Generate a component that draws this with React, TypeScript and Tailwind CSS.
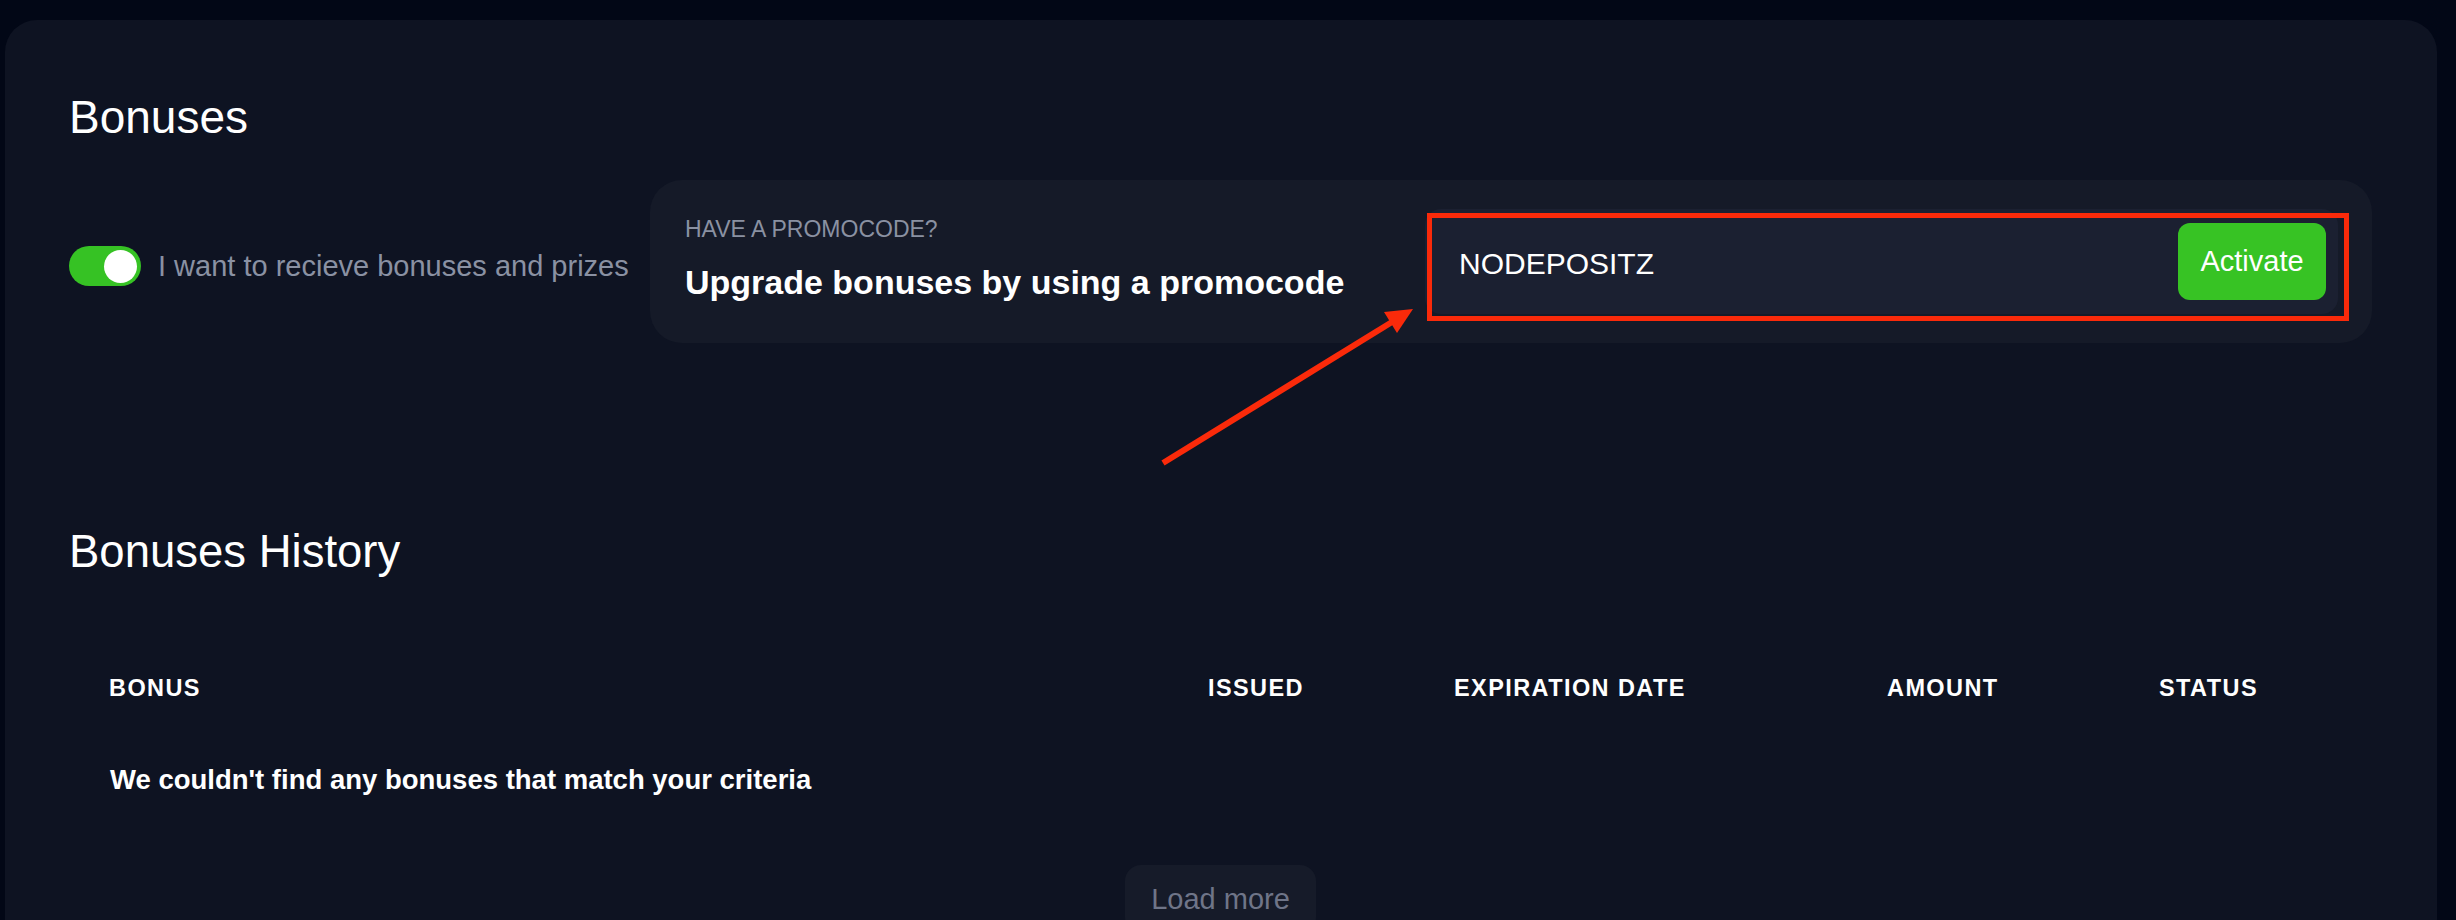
import React, { useState } from 'react';

const font = { fontFamily: '"Liberation Sans", Arial, sans-serif' };

const columns = ['BONUS', 'ISSUED', 'EXPIRATION DATE', 'AMOUNT', 'STATUS'];

const App: React.FC = () => {
    const [enabled, setEnabled] = useState(true);
    const [code, setCode] = useState('NODEPOSITZ');

    return (
        <div className="relative h-[920px] w-full overflow-hidden bg-[#020716]" style={font}>
            {/* main card */}
            <div className="ml-[5px] mt-[20px] w-[2432px] rounded-[32px] bg-[#0e1322] pl-[64px] pr-[65px] pt-[74px] pb-[80px]">
                <h1 className="text-[46px] leading-none text-white">Bonuses</h1>

                <div className="mt-[40px] flex items-center gap-[24px]">
                    <div className="mt-[9px] flex w-[557px] items-center gap-[17px]">
                        <button
                            onClick={() => setEnabled(!enabled)}
                            className={`flex h-[40px] w-[72px] shrink-0 items-center rounded-full px-[4px] ${enabled ? 'justify-end bg-[#36c224]' : 'justify-start bg-[#3a4152]'}`}
                        >
                            <span className="h-[33px] w-[33px] rounded-full bg-white"></span>
                        </button>
                        <span className="whitespace-nowrap text-[29px] leading-[40px] text-[#8a91a3]">
                            I want to recieve bonuses and prizes
                        </span>
                    </div>

                    {/* promocode box */}
                    <div className="flex h-[163px] flex-1 items-center justify-between rounded-[32px] bg-[#151a28] pl-[35px] pr-[34px]">
                        <div className="mb-[7px] flex flex-col">
                            <span className="text-[23px] leading-[32px] text-[#8a91a2]">HAVE A PROMOCODE?</span>
                            <span className="mt-[15px] text-[34px] font-bold leading-[44px] text-white">
                                Upgrade bonuses by using a promocode
                            </span>
                        </div>
                        <div className="relative flex h-[105px] w-[913px] items-center justify-between rounded-[16px] bg-[#1b2031] pl-[34px] pr-[12px]">
                            <input
                                value={code}
                                onChange={(e) => setCode(e.target.value)}
                                className="mt-[4px] w-[600px] bg-transparent text-[30px] leading-[40px] text-white outline-none"
                                style={font}
                            />
                            <button className="h-[77px] w-[148px] rounded-[12px] bg-[#37c324] text-[29px] text-white">
                                Activate
                            </button>
                            {/* red annotation frame */}
                            <div className="pointer-events-none absolute left-[2px] top-[4px] h-[108px] w-[922px] border-[5px] border-[#fa2a0a]"></div>
                        </div>
                    </div>
                </div>

                <h2 className="mt-[186px] text-[45.5px] leading-none text-white">Bonuses History</h2>

                <div className="mt-[97px] grid grid-cols-[1099px_246px_433px_272px_1fr] pl-[40px]">
                    {columns.map((c) => (
                        <span key={c} className="text-[23.5px] font-bold leading-[32px] tracking-[0.06em] text-white">
                            {c}
                        </span>
                    ))}
                </div>

                <p className="mt-[56px] pl-[41px] text-[27.5px] font-bold leading-[40px] text-white">
                    We couldn't find any bonuses that match your criteria
                </p>

                <div className="mt-[65px] flex justify-center">
                    <button className="rounded-[16px] bg-[#161b29] px-[26px] py-[14px] text-[29px] leading-[40px] text-[#6f7588]">
                        Load more
                    </button>
                </div>
            </div>

            {/* annotation arrow */}
            <svg className="pointer-events-none absolute left-0 top-0" width="2456" height="920" viewBox="0 0 2456 920">
                <line x1="1163" y1="463" x2="1392" y2="322" stroke="#fa2a0a" strokeWidth="6" />
                <polygon points="1413,309 1397,333 1384,312" fill="#fa2a0a" />
            </svg>
        </div>
    );
};

export default App;
